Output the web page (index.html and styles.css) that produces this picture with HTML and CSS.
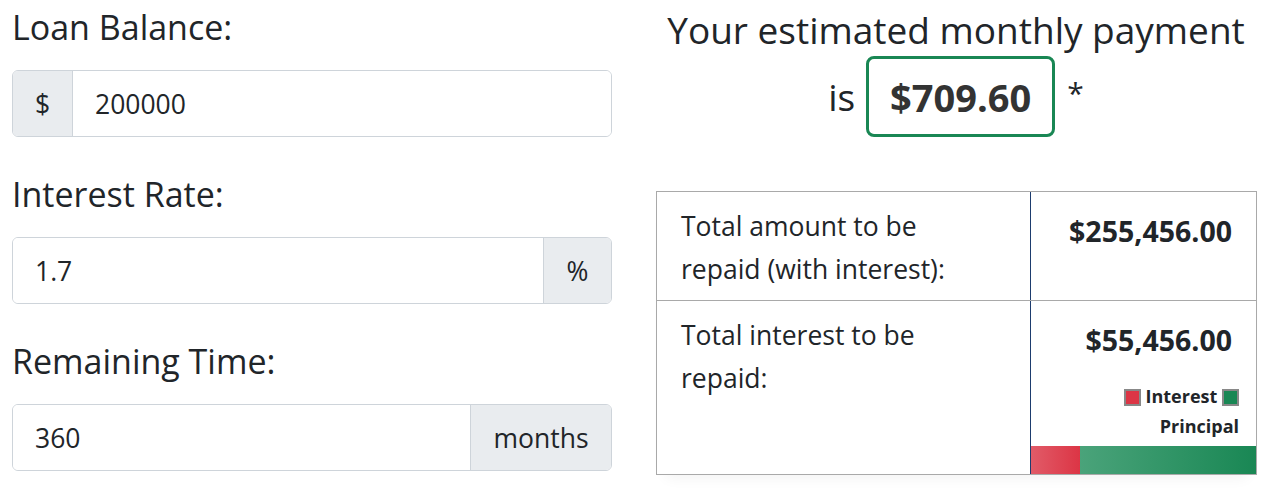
FILE: index.html
```html
<!DOCTYPE html>
<html>
<head>
<meta charset="utf-8">
<link rel="stylesheet" href="styles.css">
</head>
<body>
<div class="page">
  <div class="left">
    <div class="field">
      <label class="label">Loan Balance:</label>
      <div class="group">
        <span class="addon addon-left">$</span>
        <span class="input">200000</span>
      </div>
    </div>
    <div class="field">
      <label class="label">Interest Rate:</label>
      <div class="group">
        <span class="input">1.7</span>
        <span class="addon addon-right pct">%</span>
      </div>
    </div>
    <div class="field">
      <label class="label">Remaining Time:</label>
      <div class="group">
        <span class="input">360</span>
        <span class="addon addon-right months">months</span>
      </div>
    </div>
  </div>
  <div class="right">
    <div class="headline">
      <div class="line1">Your estimated monthly payment</div>
      <div class="line2"><span class="is">is</span><span class="amount">$709.60</span><span class="star">*</span></div>
    </div>
    <div class="table">
      <div class="row row1">
        <div class="cell desc">Total amount to be repaid (with interest):</div>
        <div class="cell val"><span class="num">$255,456.00</span></div>
      </div>
      <div class="row row2">
        <div class="cell desc">Total interest to be repaid:</div>
        <div class="cell val val2">
          <span class="num">$55,456.00</span>
          <div class="legend">
            <span class="sw red"></span> Interest <span class="sw green"></span><br>Principal
          </div>
          <div class="bar">
            <div class="bar-int" style="width:21.7%"></div>
            <div class="bar-prin" style="width:78.3%"></div>
          </div>
        </div>
      </div>
    </div>
  </div>
</div>
</body>
</html>
```
FILE: styles.css
```css
* { box-sizing: border-box; }
html, body { margin: 0; padding: 0; background: #fff; }
body {
  font-family: "Open Sans", "Noto Sans", sans-serif;
  color: #212529;
  width: 1280px;
  height: 493px;
  overflow: hidden;
}
.page {
  display: flex;
  gap: 44px;
  padding: 0 12px;
}
.left { width: 600px; display: flex; flex-direction: column; }
.right { width: 600px; }
.field { display: flex; flex-direction: column; }
.label {
  font-size: 34px;
  line-height: 48px;
  height: 48px;
  margin-top: 3px;
  margin-bottom: 19px;
  color: #212529;
}
.field + .field .label { margin-top: 33px; }
.group {
  display: flex;
  height: 67px;
  border: 1px solid #ced4da;
  border-radius: 6px;
  overflow: hidden;
}
.input {
  flex: 1;
  display: flex;
  align-items: center;
  padding-left: 22px;
  font-size: 26.5px;
  color: #212529;
  background: #fff;
}
.addon {
  display: flex;
  align-items: center;
  justify-content: center;
  background: #e9ecef;
  font-size: 26.5px;
  color: #212529;
}
.addon-left { width: 60px; border-right: 1px solid #ced4da; }
.addon-right { border-left: 1px solid #ced4da; }
.pct { width: 68px; }
.months { width: 141px; }

.headline { text-align: center; white-space: nowrap; }
.line1 {
  font-size: 37px;
  line-height: 60px;
}
.line2 {
  display: flex;
  justify-content: center;
  align-items: center;
  margin-top: -4px;
  font-size: 37px;
}
.is { margin-right: 11px; }
.amount {
  display: inline-flex;
  align-items: center;
  justify-content: center;
  width: 189px;
  height: 81px;
  border: 3px solid #198754;
  border-radius: 8px;
  font-weight: 700;
  color: #333;
  font-size: 38px;
}
.star { margin-left: 12px; font-size: 30px; align-self: flex-start; margin-top: 16px; }

.table {
  margin-top: 54px;
  border: 1px solid #a9a9a9;
  width: 601px;
  box-shadow: 0 12px 14px -10px rgba(0,0,0,0.06);
}
.row { display: flex; }
.row1 { height: 109px; border-bottom: 1px solid #a9a9a9; }
.row2 { height: 173px; }
.cell { font-size: 26.5px; }
.desc {
  width: 374px;
  border-right: 1.5px solid #1d3c6e;
  padding: 13px 60px 0 24px;
  line-height: 43px;
}
.val {
  flex: 1;
  text-align: right;
  padding: 20px 24px 0 0;
  font-weight: 700;
  font-size: 28.5px;
}
.val2 { display: flex; flex-direction: column; align-items: flex-end; padding-right: 0; }
.val2 .num { margin-right: 24px; }
.legend {
  margin-top: 22px;
  margin-right: 17px;
  font-size: 18px;
  line-height: 30px;
  text-align: right;
  color: #212529;
}
.sw {
  display: inline-block;
  width: 17px;
  height: 17px;
  border: 2px solid #888;
  vertical-align: -3px;
}
.red { background: #dc3545; }
.green { background: #198754; }
.bar {
  margin-top: auto;
  width: 100%;
  height: 28px;
  display: flex;
}
.bar-int { background: linear-gradient(90deg, #e15b68, #dc3545); }
.bar-prin { background: linear-gradient(90deg, #4aa37a, #198754); }
```
